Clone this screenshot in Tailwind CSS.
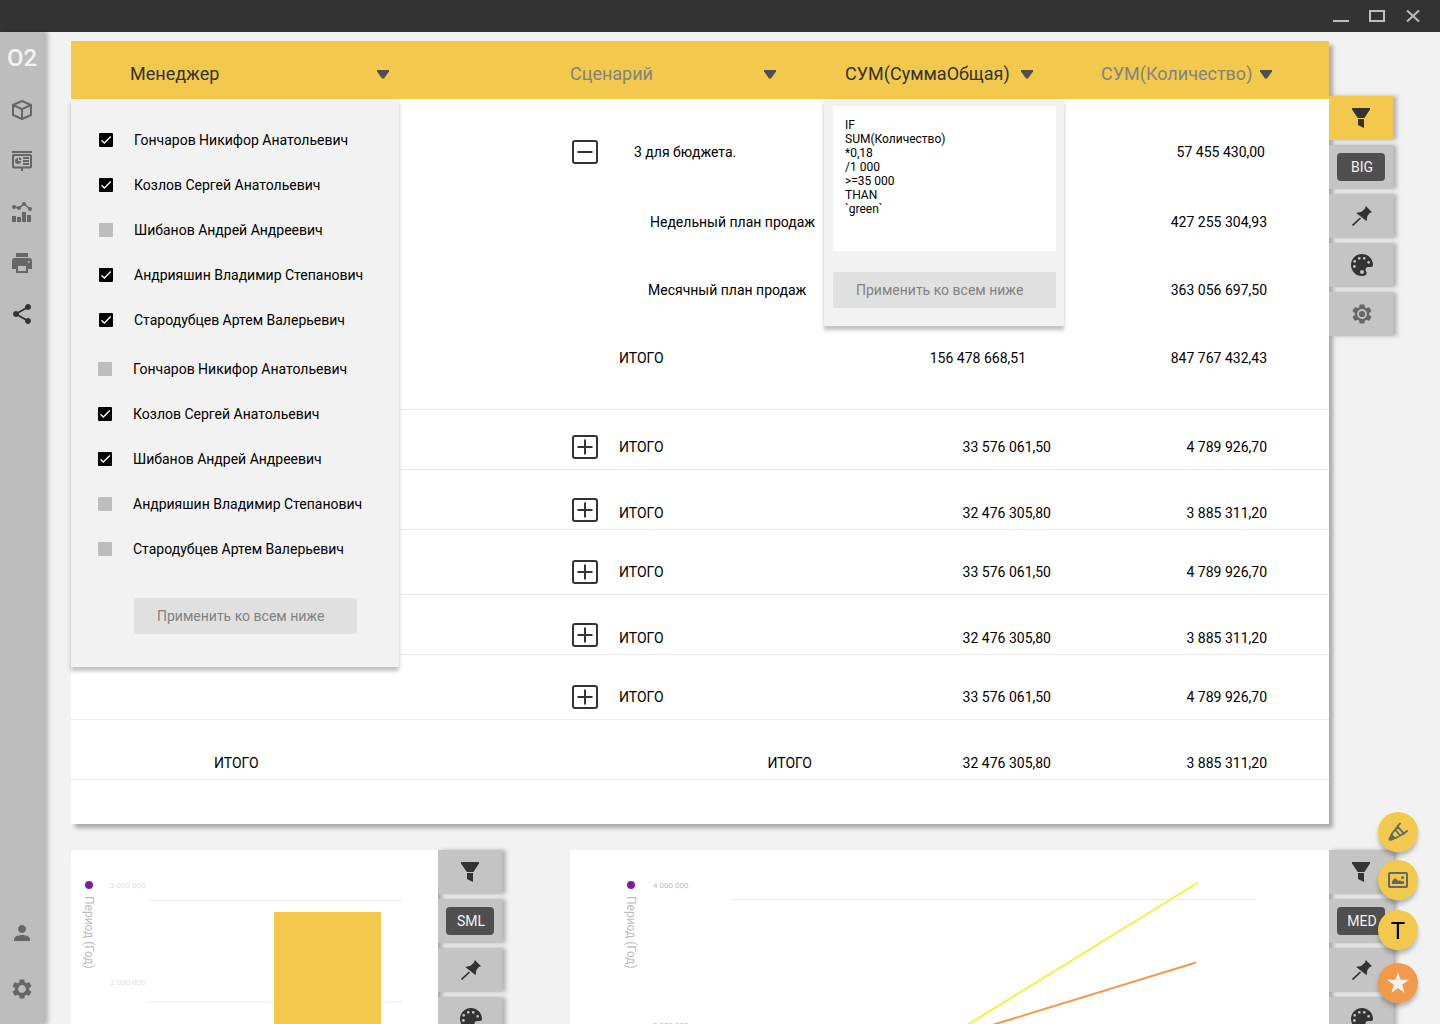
<!DOCTYPE html>
<html lang="ru">
<head>
<meta charset="utf-8">
<meta name="viewport" content="width=device-width, initial-scale=1">
<title>O2</title>
<script src="https://cdn.jsdelivr.net/npm/@tailwindcss/browser@4"></script>
</head>
<body class="flex h-screen flex-col overflow-hidden bg-[#f2f2f2] font-['Roboto',sans-serif] text-sm leading-5 text-black">

<!-- Shared icons -->
<svg class="hidden" aria-hidden="true">
  <symbol id="funnel" viewBox="0 0 18 20"><path d="M0 0h18v1.6L12.4 10H5.8L0 1.6zM6 11h6v9l-6-3z"/></symbol>
  <symbol id="pin" viewBox="0 0 20 20"><path d="M13.8 0L20 6.2l-2.3.9-2.4 3.2-.6 5-6-4.8L4.2 7l5.3-1.2 3.3-3z"/><path d="M.5 19.5L8.5 12" fill="none" stroke="currentColor" stroke-width="1.7"/></symbol>
  <symbol id="palette" viewBox="0 0 22 22"><path fill-rule="evenodd" d="M11 0C4.9 0 0 4.9 0 11s4.9 11 11 11c3.2 0 5-1.400 4.600-3.400-.3-1.400-1.200-2-1.100-3.400.1-1.500 1.300-2.200 2.800-2.200H20c1.400 0 2-.8 2-2C22 4.900 17.100 0 11 0zM3.700 5.900a1.400 1.400 0 100 2.800 1.400 1.400 0 000-2.800zm4.600-3a1.400 1.400 0 100 2.800 1.400 1.400 0 000-2.800zm5 0a1.400 1.400 0 100 2.800 1.400 1.400 0 000-2.800zm4.300 4a1.400 1.400 0 100 2.800 1.400 1.400 0 000-2.800zm-14.200 4.200a1.400 1.400 0 100 2.800 1.400 1.400 0 000-2.800zM11 16a2 2 0 100 4 2 2 0 000-4z"/></symbol>
  <symbol id="gear" viewBox="0 0 24 24"><path d="M19.140 12.940c.04-.3.06-.61.06-.94 0-.32-.02-.64-.07-.94l2.030-1.580c.18-.14.23-.41.12-.61l-1.920-3.320c-.12-.22-.37-.29-.59-.22l-2.390.96c-.5-.38-1.030-.7-1.620-.94l-.36-2.540c-.04-.24-.24-.41-.48-.41h-3.840c-.24 0-.43.17-.47.41l-.36 2.540c-.59.24-1.130.57-1.620.94l-2.390-.96c-.22-.08-.47 0-.59.22L2.740 8.870c-.12.21-.08.47.12.61l2.030 1.580c-.05.3-.09.63-.09.94s.02.64.07.94l-2.030 1.580c-.18.14-.23.41-.12.61l1.920 3.320c.12.22.37.29.59.22l2.390-.96c.5.38 1.030.7 1.620.94l.36 2.540c.05.24.24.41.48.41h3.840c.24 0 .44-.17.47-.41l.36-2.540c.59-.24 1.130-.56 1.620-.94l2.390.96c.22.08.47 0 .59-.22l1.920-3.320c.12-.22.07-.47-.12-.61l-2.010-1.580zM12 15.900c-2.150 0-3.900-1.750-3.900-3.900s1.750-3.900 3.900-3.900 3.900 1.750 3.900 3.900-1.750 3.900-3.900 3.900z"/></symbol>
  <symbol id="arrow" viewBox="0 0 12 9"><path d="M0 0h12v1.500L7 8.500H5L0 1.500z"/></symbol>
  <symbol id="check" viewBox="0 0 14 14"><path d="M2.500 7.200L5.300 10 11.800 3.500" fill="none" stroke="#fff" stroke-width="1.300"/></symbol>
  <symbol id="minus" viewBox="0 0 26 24"><rect x="1" y="1" width="24" height="22" rx="2" fill="none" stroke="currentColor" stroke-width="2"/><path d="M5.500 11h15v2h-15z"/></symbol>
  <symbol id="plus" viewBox="0 0 26 24"><rect x="1" y="1" width="24" height="22" rx="2" fill="none" stroke="currentColor" stroke-width="2"/><path d="M5.500 11h6.500V4.500h2V11h6.500v2H14v6.500h-2V13H5.500z"/></symbol>
</svg>

<header class="flex h-8 shrink-0 items-center justify-end gap-5 bg-[#333] pr-[19px] text-[#bdbdbd]">
  <button aria-label="Свернуть"><svg class="h-4 w-4" viewBox="0 0 16 16"><path d="M0 12h16v2H0z" fill="currentColor"/></svg></button>
  <button aria-label="Развернуть"><svg class="h-4 w-4" viewBox="0 0 16 16"><rect x="1" y="3" width="14" height="10" fill="none" stroke="currentColor" stroke-width="2"/></svg></button>
  <button aria-label="Закрыть"><svg class="h-4 w-4" viewBox="0 0 16 16"><path d="M2 2.500l12 11M14 2.500l-12 11" stroke="currentColor" stroke-width="2"/></svg></button>
</header>

<div class="flex min-h-0 flex-1">

  <nav class="z-10 flex w-11 shrink-0 flex-col items-center bg-[#bdbdbd] pt-3 pb-[23px] text-[#666] shadow-[4px_0_4px_rgba(0,0,0,0.25)]">
    <a href="#" class="text-2xl leading-7 font-medium text-[#f2f2f2]">O2</a>
    <div class="mt-[26px] flex flex-col gap-[27px]">
      <a href="#" aria-label="Куб"><svg class="h-6 w-6" viewBox="0 0 24 24" fill="none" stroke="currentColor" stroke-width="2" stroke-linejoin="round"><path d="M12 3l9 4v10l-9 4-9-4V7zM3 7l9 4.200L21 7M12 11.200V21"/></svg></a>
      <a href="#" aria-label="Презентация"><svg class="h-6 w-6" viewBox="-2 -2 24 24" fill="currentColor"><path d="M0 0h20v2H0zM9 17h2v3H9zM11 6h6v2h-6zM11 9h6v2h-6zM11 12h6v2h-6zM6 7v3h3a3 3 0 11-3-3z"/><path d="M7 6a3 3 0 012.500 3H7z"/><rect x="1" y="4" width="18" height="12.500" rx="1" fill="none" stroke="currentColor" stroke-width="2"/></svg></a>
      <a href="#" aria-label="Графики"><svg class="h-6 w-6" viewBox="-2 -2 24 24" fill="currentColor"><path d="M0 14h4v6H0zM5 15h4v5H5zM10 10h4v10h-4zM15 13h4v7h-4z"/><circle cx="2" cy="5" r="2"/><circle cx="7" cy="6" r="2"/><circle cx="12" cy="2" r="2"/><circle cx="18" cy="7" r="2"/><path d="M2 5l5 1 5-4 6 5" fill="none" stroke="currentColor" stroke-width="1.500"/></svg></a>
      <a href="#" aria-label="Печать"><svg class="h-6 w-6" viewBox="0 0 24 24" fill="currentColor"><path d="M18 2H6v4h12zM19 12a1 1 0 110-2 1 1 0 010 2zm-3 8H8v-5h8zM19 7H5a3 3 0 00-3 3v8h4v4h12v-4h4v-8a3 3 0 00-3-3z"/></svg></a>
      <a href="#" aria-label="Поделиться" class="text-[#333]"><svg class="h-6 w-6" viewBox="0 0 24 24" fill="currentColor"><path d="M18 16.080c-.76 0-1.440.3-1.960.77L8.910 12.700c.05-.23.09-.46.09-.7s-.04-.47-.09-.7l7.050-4.110c.54.5 1.250.81 2.040.81 1.660 0 3-1.340 3-3s-1.340-3-3-3-3 1.340-3 3c0 .24.04.47.09.7L8.040 9.810C7.500 9.310 6.790 9 6 9c-1.660 0-3 1.340-3 3s1.340 3 3 3c.79 0 1.500-.31 2.040-.81l7.120 4.160c-.05.21-.08.43-.08.65 0 1.610 1.310 2.920 2.920 2.920 1.610 0 2.920-1.310 2.920-2.920s-1.310-2.920-2.920-2.920z"/></svg></a>
    </div>
    <div class="mt-auto flex flex-col gap-8">
      <a href="#" aria-label="Профиль"><svg class="h-6 w-6" viewBox="0 0 24 24" fill="currentColor"><path d="M12 12c2.210 0 4-1.790 4-4s-1.790-4-4-4-4 1.790-4 4 1.790 4 4 4zm0 2c-2.670 0-8 1.340-8 4v2h16v-2c0-2.660-5.330-4-8-4z"/></svg></a>
      <a href="#" aria-label="Настройки"><svg class="h-6 w-6 fill-current"><use href="#gear"/></svg></a>
    </div>
  </nav>

  <main class="flex min-w-0 flex-1 flex-col gap-[26px] overflow-hidden pt-[9px] pr-[47px] pl-[27px]">

    <!-- Pivot table -->
    <section class="flex shrink-0">
      <div class="min-w-0 flex-1 bg-white pb-11 shadow-[4px_4px_4px_rgba(0,0,0,0.3)]">
        <table class="w-full table-fixed border-separate border-spacing-0">
          <colgroup><col><col class="w-[254px]"><col class="w-60"><col class="w-[265px]"></colgroup>
          <thead class="text-lg leading-6 text-[#828282]">
            <tr class="h-[58px] bg-[#f2c94c]">
              <th class="relative p-0 font-normal">
                <button class="ml-[59px] flex w-[259px] items-center justify-between pt-2 text-[#333]">Менеджер<svg class="h-[9px] w-3 fill-[#4f4f4f]"><use href="#arrow"/></svg></button>
                <!-- Manager filter -->
                <div class="absolute top-full left-0 w-[328px] bg-[#f2f2f2] pt-[18px] pb-[33px] text-left text-sm leading-5 text-black shadow-[0_4px_4px_rgba(0,0,0,0.25)]">
                  <div class="pl-7">
                    <label class="flex h-[45px] items-center gap-[21px]"><span class="grid"><input type="checkbox" checked class="peer size-3.5 appearance-none rounded-[1px] bg-[#bdbdbd] checked:bg-black [grid-area:1/1]"><svg class="hidden size-3.5 peer-checked:block [grid-area:1/1]"><use href="#check"/></svg></span>Гончаров Никифор Анатольевич</label>
                    <label class="flex h-[45px] items-center gap-[21px]"><span class="grid"><input type="checkbox" checked class="peer size-3.5 appearance-none rounded-[1px] bg-[#bdbdbd] checked:bg-black [grid-area:1/1]"><svg class="hidden size-3.5 peer-checked:block [grid-area:1/1]"><use href="#check"/></svg></span>Козлов Сергей Анатольевич</label>
                    <label class="flex h-[45px] items-center gap-[21px]"><span class="grid"><input type="checkbox" class="peer size-3.5 appearance-none rounded-[1px] bg-[#bdbdbd] checked:bg-black [grid-area:1/1]"><svg class="hidden size-3.5 peer-checked:block [grid-area:1/1]"><use href="#check"/></svg></span>Шибанов Андрей Андреевич</label>
                    <label class="flex h-[45px] items-center gap-[21px]"><span class="grid"><input type="checkbox" checked class="peer size-3.5 appearance-none rounded-[1px] bg-[#bdbdbd] checked:bg-black [grid-area:1/1]"><svg class="hidden size-3.5 peer-checked:block [grid-area:1/1]"><use href="#check"/></svg></span>Андрияшин Владимир Степанович</label>
                    <label class="flex h-[45px] items-center gap-[21px]"><span class="grid"><input type="checkbox" checked class="peer size-3.5 appearance-none rounded-[1px] bg-[#bdbdbd] checked:bg-black [grid-area:1/1]"><svg class="hidden size-3.5 peer-checked:block [grid-area:1/1]"><use href="#check"/></svg></span>Стародубцев Артем Валерьевич</label>
                  </div>
                  <div class="mt-1 pl-[27px]">
                    <label class="flex h-[45px] items-center gap-[21px]"><span class="grid"><input type="checkbox" class="peer size-3.5 appearance-none rounded-[1px] bg-[#bdbdbd] checked:bg-black [grid-area:1/1]"><svg class="hidden size-3.5 peer-checked:block [grid-area:1/1]"><use href="#check"/></svg></span>Гончаров Никифор Анатольевич</label>
                    <label class="flex h-[45px] items-center gap-[21px]"><span class="grid"><input type="checkbox" checked class="peer size-3.5 appearance-none rounded-[1px] bg-[#bdbdbd] checked:bg-black [grid-area:1/1]"><svg class="hidden size-3.5 peer-checked:block [grid-area:1/1]"><use href="#check"/></svg></span>Козлов Сергей Анатольевич</label>
                    <label class="flex h-[45px] items-center gap-[21px]"><span class="grid"><input type="checkbox" checked class="peer size-3.5 appearance-none rounded-[1px] bg-[#bdbdbd] checked:bg-black [grid-area:1/1]"><svg class="hidden size-3.5 peer-checked:block [grid-area:1/1]"><use href="#check"/></svg></span>Шибанов Андрей Андреевич</label>
                    <label class="flex h-[45px] items-center gap-[21px]"><span class="grid"><input type="checkbox" class="peer size-3.5 appearance-none rounded-[1px] bg-[#bdbdbd] checked:bg-black [grid-area:1/1]"><svg class="hidden size-3.5 peer-checked:block [grid-area:1/1]"><use href="#check"/></svg></span>Андрияшин Владимир Степанович</label>
                    <label class="flex h-[45px] items-center gap-[21px]"><span class="grid"><input type="checkbox" class="peer size-3.5 appearance-none rounded-[1px] bg-[#bdbdbd] checked:bg-black [grid-area:1/1]"><svg class="hidden size-3.5 peer-checked:block [grid-area:1/1]"><use href="#check"/></svg></span>Стародубцев Артем Валерьевич</label>
                  </div>
                  <button class="mt-[27px] ml-[63px] h-9 w-[223px] rounded-xs bg-[#e0e0e0] pl-[23px] text-left text-[#828282]">Применить ко всем ниже</button>
                </div>
              </th>
              <th class="p-0 font-normal"><button class="flex w-[206px] items-center justify-between pt-2">Сценарий<svg class="h-[9px] w-3 fill-[#4f4f4f]"><use href="#arrow"/></svg></button></th>
              <th class="relative p-0 font-normal">
                <button class="ml-[21px] flex w-[188px] items-center justify-between pt-2 text-[#333]">СУМ(СуммаОбщая)<svg class="h-[9px] w-3 fill-[#4f4f4f]"><use href="#arrow"/></svg></button>
                <!-- Formula editor -->
                <div class="absolute top-full left-0 flex w-full flex-col gap-[21px] bg-[#f2f2f2] pt-[7px] pr-2 pb-[18px] pl-[9px] text-left text-sm leading-5 shadow-[0_4px_4px_rgba(0,0,0,0.25)]">
                  <textarea aria-label="Формула" class="h-[145px] resize-none bg-white px-3 pt-3 text-xs leading-[14px] text-black">IF
SUM(Количество)
*0,18
/1 000
&gt;=35 000
THAN
`green`</textarea>
                  <button class="h-9 rounded-xs bg-[#e0e0e0] pl-[23px] text-left">Применить ко всем ниже</button>
                </div>
              </th>
              <th class="p-0 font-normal"><button class="ml-[37px] flex w-[171px] items-center justify-between pt-2">СУМ(Количество)<svg class="h-[9px] w-3 fill-[#4f4f4f]"><use href="#arrow"/></svg></button></th>
            </tr>
          </thead>
          <tbody>
            <tr class="h-[88px]">
              <td></td>
              <td class="p-0 pt-[18px]"><div class="flex items-center gap-9 pl-0.5"><button aria-label="Свернуть группу" class="text-[#333]"><svg class="h-6 w-[26px] fill-current"><use href="#minus"/></svg></button>3 для бюджета.</div></td>
              <td></td>
              <td class="p-0 pt-[18px] pr-16 text-right">57 455 430,00</td>
            </tr>
            <tr class="h-[69px]"><td></td><td class="p-0 pl-20 whitespace-nowrap">Недельный план продаж</td><td></td><td class="p-0 pr-[62px] text-right">427 255 304,93</td></tr>
            <tr class="h-[68px]"><td></td><td class="p-0 pl-[78px] whitespace-nowrap">Месячный план продаж</td><td></td><td class="p-0 pr-[62px] text-right">363 056 697,50</td></tr>
            <tr class="h-[86px] [&>td]:border-b [&>td]:border-[#ebebeb]"><td></td><td class="p-0 pb-[18px] pl-[49px]">ИТОГО</td><td class="p-0 pr-[38px] pb-[18px] text-right">156 478 668,51</td><td class="p-0 pr-[62px] pb-[18px] text-right">847 767 432,43</td></tr>

            <tr class="h-[60px] align-bottom [&>td]:border-b [&>td]:border-[#ebebeb]"><td></td><td class="p-0 pb-2.5"><div class="flex items-center gap-[21px] pl-0.5"><button aria-label="Развернуть группу" class="text-[#333]"><svg class="h-6 w-[26px] fill-current"><use href="#plus"/></svg></button>ИТОГО</div></td><td class="p-0 pr-[13px] pb-3 text-right">33 576 061,50</td><td class="p-0 pr-[62px] pb-3 text-right">4 789 926,70</td></tr>
            <tr class="h-[60px] align-bottom [&>td]:border-b [&>td]:border-[#ebebeb]"><td></td><td class="p-0 pb-1.5"><div class="flex items-end gap-[21px] pl-0.5"><button aria-label="Развернуть группу" class="pb-px text-[#333]"><svg class="h-6 w-[26px] fill-current"><use href="#plus"/></svg></button>ИТОГО</div></td><td class="p-0 pr-[13px] pb-1.5 text-right">32 476 305,80</td><td class="p-0 pr-[62px] pb-1.5 text-right">3 885 311,20</td></tr>
            <tr class="h-[65px] align-bottom [&>td]:border-b [&>td]:border-[#ebebeb]"><td></td><td class="p-0 pb-2.5"><div class="flex items-center gap-[21px] pl-0.5"><button aria-label="Развернуть группу" class="text-[#333]"><svg class="h-6 w-[26px] fill-current"><use href="#plus"/></svg></button>ИТОГО</div></td><td class="p-0 pr-[13px] pb-3 text-right">33 576 061,50</td><td class="p-0 pr-[62px] pb-3 text-right">4 789 926,70</td></tr>
            <tr class="h-[60px] align-bottom [&>td]:border-b [&>td]:border-[#ebebeb]"><td></td><td class="p-0 pb-1.5"><div class="flex items-end gap-[21px] pl-0.5"><button aria-label="Развернуть группу" class="pb-px text-[#333]"><svg class="h-6 w-[26px] fill-current"><use href="#plus"/></svg></button>ИТОГО</div></td><td class="p-0 pr-[13px] pb-1.5 text-right">32 476 305,80</td><td class="p-0 pr-[62px] pb-1.5 text-right">3 885 311,20</td></tr>
            <tr class="h-[65px] align-bottom [&>td]:border-b [&>td]:border-[#ebebeb]"><td></td><td class="p-0 pb-2.5"><div class="flex items-center gap-[21px] pl-0.5"><button aria-label="Развернуть группу" class="text-[#333]"><svg class="h-6 w-[26px] fill-current"><use href="#plus"/></svg></button>ИТОГО</div></td><td class="p-0 pr-[13px] pb-3 text-right">33 576 061,50</td><td class="p-0 pr-[62px] pb-3 text-right">4 789 926,70</td></tr>
            <tr class="h-[60px] align-bottom [&>td]:border-b [&>td]:border-[#ebebeb]"><td class="p-0 pb-1.5 pl-[143px]">ИТОГО</td><td class="p-0 pr-3 pb-1.5 text-right">ИТОГО</td><td class="p-0 pr-[13px] pb-1.5 text-right">32 476 305,80</td><td class="p-0 pr-[62px] pb-1.5 text-right">3 885 311,20</td></tr>
          </tbody>
        </table>
      </div>
      <div class="relative flex w-16 flex-col gap-[5px] pt-[55px] text-[#333]">
        <button aria-label="Фильтр" class="flex h-11 items-center justify-center bg-[#f2c94c] shadow-[4px_0_4px_rgba(0,0,0,0.25)]"><svg class="h-5 w-[18px] fill-current"><use href="#funnel"/></svg></button>
        <button class="flex h-11 items-center justify-center bg-[#c4c4c4] shadow-[4px_0_4px_rgba(0,0,0,0.25)]"><span class="w-12 rounded bg-[#4f4f4f] py-1 pl-0.5 text-[#f2f2f2]">BIG</span></button>
        <button aria-label="Закрепить" class="flex h-11 items-center justify-center bg-[#c4c4c4] pl-0.5 shadow-[4px_0_4px_rgba(0,0,0,0.25)]"><svg class="size-5 fill-current"><use href="#pin"/></svg></button>
        <button aria-label="Палитра" class="flex h-11 items-center justify-center bg-[#c4c4c4] pl-0.5 shadow-[4px_0_4px_rgba(0,0,0,0.25)]"><svg class="size-[22px] fill-current"><use href="#palette"/></svg></button>
        <button aria-label="Настройки" class="flex h-11 items-center justify-center bg-[#c4c4c4] pl-0.5 text-[#666] shadow-[4px_0_4px_rgba(0,0,0,0.25)]"><svg class="size-6 fill-current"><use href="#gear"/><circle cx="12" cy="12" r="4" stroke="#c4c4c4" stroke-width="1.800"/></svg></button>
      </div>
    </section>

    <!-- Charts -->
    <section class="flex shrink-0">
      <article class="flex h-[400px] w-[367px] items-start rounded-xs bg-white pt-[30px] text-[#e0e0e0] shadow-[4px_4px_4px_rgba(0,0,0,0.3)]">
        <div class="ml-[9px] flex w-[18px] flex-col items-center gap-[7px] pt-px text-xs leading-[18px] text-[#bdbdbd]">
          <span class="size-2 rounded-full bg-[#7b1fa2]"></span><span class="[writing-mode:vertical-rl]">Период (Год)</span>
        </div>
        <div class="ml-3 flex w-[38px] flex-col gap-[87px] pt-px text-[8px] leading-[10px]"><span>3 000 000</span><span>2 000 000</span></div>
        <svg class="h-[370px] min-w-0 flex-1 mr-9" viewBox="0 0 254 370" preserveAspectRatio="none"><path d="M0 20.500h254" stroke="#ebebeb"/><path d="M0 122h254" stroke="#f5f5f5" stroke-width="2"/><path d="M126 32h107v338H126z" fill="#f2c94c"/></svg>
      </article>
      <div class="relative mr-[68px] flex w-16 flex-col gap-[5px] text-[#333]">
        <button aria-label="Фильтр" class="flex h-11 items-center justify-center bg-[#c4c4c4] shadow-[4px_0_4px_rgba(0,0,0,0.25)]"><svg class="h-5 w-[18px] fill-current"><use href="#funnel"/></svg></button>
        <button class="flex h-11 items-center justify-center bg-[#c4c4c4] shadow-[4px_0_4px_rgba(0,0,0,0.25)]"><span class="w-12 rounded bg-[#4f4f4f] py-1 pl-0.5 text-[#f2f2f2]">SML</span></button>
        <button aria-label="Закрепить" class="flex h-11 items-center justify-center bg-[#c4c4c4] pl-0.5 shadow-[4px_0_4px_rgba(0,0,0,0.25)]"><svg class="size-5 fill-current"><use href="#pin"/></svg></button>
        <button aria-label="Палитра" class="flex h-11 items-center justify-center bg-[#c4c4c4] pl-0.5 shadow-[4px_0_4px_rgba(0,0,0,0.25)]"><svg class="size-[22px] fill-current"><use href="#palette"/></svg></button>
      </div>
      <article class="flex h-[400px] min-w-0 flex-1 items-start rounded-xs bg-white pt-[30px] text-[#bdbdbd] shadow-[4px_4px_4px_rgba(0,0,0,0.3)]">
        <div class="ml-[52px] flex w-[18px] flex-col items-center gap-[7px] pt-px text-xs leading-[18px]">
          <span class="size-2 rounded-full bg-[#7b1fa2]"></span><span class="[writing-mode:vertical-rl]">Период (Год)</span>
        </div>
        <div class="ml-[13px] flex w-[78px] flex-col gap-[130px] pt-px text-[8px] leading-[10px]"><span>4 000 000</span><span>3 000 000</span></div>
        <svg class="h-[370px] min-w-0 flex-1 mr-[73px]" viewBox="0 0 525 370" preserveAspectRatio="none"><path d="M0 19.500h525" stroke="#ebebeb"/><g fill="none" stroke-width="2"><path d="M467 2.500L237 144.500 20 278" stroke="#ffeb3b"/><path d="M465 82.500L263 144.500 20 219" stroke="#f2994a"/></g></svg>
      </article>
      <div class="relative flex w-16 flex-col gap-[5px] text-[#333]">
        <button aria-label="Фильтр" class="flex h-11 items-center justify-center bg-[#c4c4c4] shadow-[4px_0_4px_rgba(0,0,0,0.25)]"><svg class="h-5 w-[18px] fill-current"><use href="#funnel"/></svg></button>
        <button class="flex h-11 items-center justify-center bg-[#c4c4c4] shadow-[4px_0_4px_rgba(0,0,0,0.25)]"><span class="w-12 rounded bg-[#4f4f4f] py-1 pl-0.5 text-[#f2f2f2]">MED</span></button>
        <button aria-label="Закрепить" class="flex h-11 items-center justify-center bg-[#c4c4c4] pl-0.5 shadow-[4px_0_4px_rgba(0,0,0,0.25)]"><svg class="size-5 fill-current"><use href="#pin"/></svg></button>
        <button aria-label="Палитра" class="flex h-11 items-center justify-center bg-[#c4c4c4] pl-0.5 shadow-[4px_0_4px_rgba(0,0,0,0.25)]"><svg class="size-[22px] fill-current"><use href="#palette"/></svg></button>
      </div>
    </section>
  </main>
</div>

<!-- Floating actions -->
<div class="fixed right-[22px] bottom-[21px] z-20 flex flex-col text-[#666]">
  <button aria-label="Маркер" class="mb-2 flex size-10 items-center justify-center rounded-full bg-[#f2c94c] shadow-[0_4px_4px_rgba(0,0,0,0.25)]"><svg class="size-5" viewBox="0 0 20 20" fill="none" stroke="currentColor" stroke-width="1.800"><path d="M12.500 1L9.500 4.500l6.500 7L19.500 8.500M9.700 4.700L4 11.500l-1.500 4 1.200 1.300 4.300-.8 8-4.700M7.300 7.800l4.700 5.700"/><path d="M.7 16.500l3-5 4.300 4.800-4.500 2.400-2.800-.2z" fill="currentColor" stroke="none"/></svg></button>
  <button aria-label="Изображение" class="mb-2.5 flex size-10 items-center justify-center rounded-full bg-[#f2c94c] shadow-[0_4px_4px_rgba(0,0,0,0.25)]"><svg class="h-4 w-5" viewBox="0 0 20 16" fill="currentColor"><rect x="1" y="1" width="18" height="14" rx="1" fill="none" stroke="currentColor" stroke-width="2"/><circle cx="14.500" cy="5.500" r="1.500"/><path d="M4 12V9l3-3 3.500 3 1.500-.8 2 1.300 2-.5v3z"/></svg></button>
  <button class="mb-[13px] flex size-10 items-center justify-center rounded-full bg-[#f2c94c] pt-0.5 text-2xl text-black shadow-[0_4px_4px_rgba(0,0,0,0.25)]">T</button>
  <button aria-label="Избранное" class="flex size-10 items-center justify-center rounded-full bg-[#f2994a] text-[#f2f2f2] shadow-[0_4px_4px_rgba(0,0,0,0.25)]"><svg class="size-[22px]" viewBox="0 0 22 22" fill="currentColor"><path d="M11 0l2.600 7.700H22l-6.700 5.100 2.400 8.200-6.700-4.900L4.300 21l2.400-8.200L0 7.700h8.400z"/></svg></button>
</div>
</body>
</html>
